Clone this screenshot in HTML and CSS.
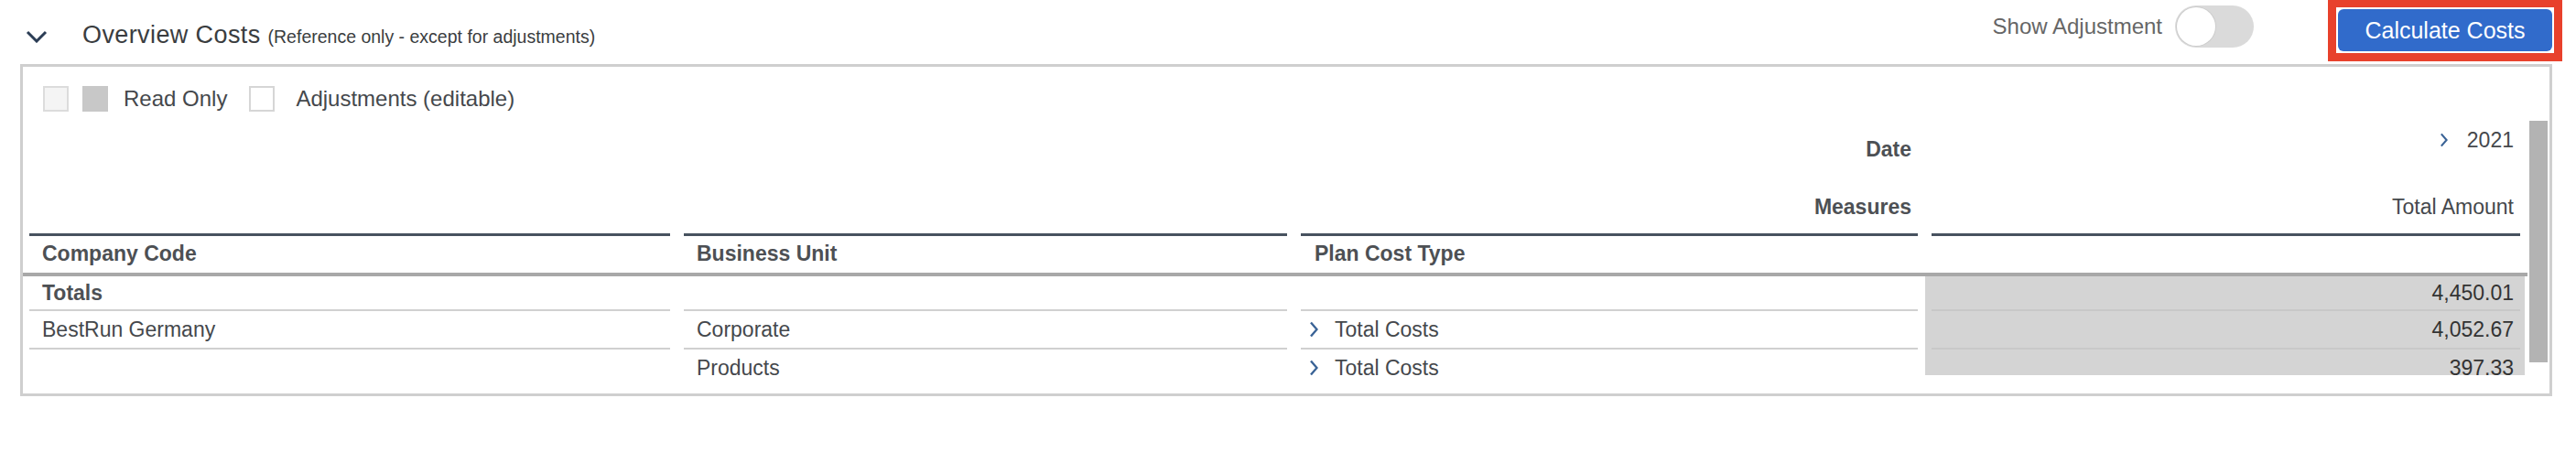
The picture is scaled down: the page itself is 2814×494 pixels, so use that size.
FILE: index.html
```html
<!DOCTYPE html>
<html lang="en">
<head>
<meta charset="utf-8">
<title>Overview Costs</title>
<link rel="stylesheet" href="styles.css">
</head>
<body>
<div class="page">
  <header class="section-header">
    <div class="title-group">
      <svg class="collapse-icon" width="24" height="14" viewBox="0 0 24 14"><polyline points="2,2 12,12 22,2" fill="none" stroke="#2b3d55" stroke-width="3"/></svg>
      <h2 class="title">Overview Costs <span class="subtitle">(Reference only - except for adjustments)</span></h2>
    </div>
    <div class="actions">
      <span class="switch-label">Show Adjustment</span>
      <span class="switch"><span class="switch-knob"></span></span>
      <span class="highlight"><button class="btn-primary" type="button">Calculate Costs</button></span>
    </div>
  </header>

  <section class="panel">
    <div class="legend">
      <span class="swatch swatch-light"></span>
      <span class="swatch swatch-readonly"></span>
      <span class="legend-text">Read Only</span>
      <span class="swatch swatch-edit"></span>
      <span class="legend-text legend-text-edit">Adjustments (editable)</span>
    </div>

    <div class="panel-body">
      <div class="pivot">
        <div class="pivot-head">
          <div class="dim-label date-label">Date</div>
          <div class="measure-head year-head">
            <svg class="chev chev-sm" width="9" height="16" viewBox="0 0 10 18"><polyline points="2,1.5 8.5,9 2,16.5" fill="none" stroke="#3a6396" stroke-width="2.4"/></svg>
            <span>2021</span>
          </div>
          <div class="dim-label measures-label">Measures</div>
          <div class="measure-head amount-head">Total Amount</div>
          <div class="col-head">Company Code</div>
          <div class="col-head">Business Unit</div>
          <div class="col-head col-head-3">Plan Cost Type</div>
          <div class="col-head col-head-data"></div>
        </div>

        <div class="pivot-rule"></div>

        <div class="pivot-body">
          <div class="dims-body">
            <div class="cell r1 bold">Totals</div>
            <div class="cell r1"></div>
            <div class="cell r1"></div>

            <div class="cell r2">BestRun Germany</div>
            <div class="cell r2">Corporate</div>
            <div class="cell r2 cell-member">
              <svg class="chev" width="10" height="18" viewBox="0 0 10 18"><polyline points="2,1.5 8.5,9 2,16.5" fill="none" stroke="#3a6396" stroke-width="2.4"/></svg>
              <span>Total Costs</span>
            </div>

            <div class="cell r3"></div>
            <div class="cell r3">Products</div>
            <div class="cell r3 cell-member">
              <svg class="chev" width="10" height="18" viewBox="0 0 10 18"><polyline points="2,1.5 8.5,9 2,16.5" fill="none" stroke="#3a6396" stroke-width="2.4"/></svg>
              <span>Total Costs</span>
            </div>
          </div>

          <div class="data-body">
            <div class="data-cell r1">4,450.01</div>
            <div class="data-cell r2">4,052.67</div>
            <div class="data-cell r3">397.33</div>
          </div>
        </div>
      </div>

      <div class="scroll-track"><div class="scroll-thumb"></div></div>
    </div>
  </section>
</div>
</body>
</html>
```

FILE: styles.css
```css
* {
  box-sizing: border-box;
}

body {
  margin: 0;
  background: #ffffff;
  font-family: "Liberation Sans", Arial, sans-serif;
  color: #45484c;
}

.page {
  width: 2814px;
  padding: 0 26px 0 22px;
}

/* ---------- section header ---------- */
.section-header {
  display: flex;
  justify-content: space-between;
  align-items: flex-start;
  height: 70px;
}

.title-group {
  display: flex;
  align-items: flex-start;
}

.collapse-icon {
  flex: none;
  margin: 33px 0 0 6px;
}

.title {
  margin: 22px 0 0 38px;
  font-size: 27px;
  line-height: 32px;
  font-weight: 400;
  letter-spacing: 0.4px;
  color: #3a3d40;
  white-space: nowrap;
}

.subtitle {
  font-size: 19.5px;
  line-height: 1;
  letter-spacing: 0;
  color: #3a3d40;
}

.actions {
  display: flex;
  align-items: flex-start;
}

.switch-label {
  margin-top: 14px;
  font-size: 24px;
  line-height: 30px;
  color: #666666;
  white-space: nowrap;
}

.switch {
  display: flex;
  width: 86px;
  height: 46px;
  margin: 6px 0 0 14px;
  padding: 2px;
  border-radius: 23px;
  background: #dadada;
}

.switch-knob {
  width: 42px;
  height: 42px;
  border-radius: 50%;
  background: #ffffff;
  box-shadow: 0 0 0 1px #cdcdcd;
}

.highlight {
  display: flex;
  margin: -1px -11px 0 81px;
  padding: 2px;
  border: 9px solid #e8412c;
  background: #ffffff;
}

.btn-primary {
  width: 234px;
  height: 46px;
  margin: 0;
  padding: 0;
  border: 0;
  border-radius: 6px;
  background: #316bcb;
  color: #ffffff;
  font-family: "Liberation Sans", Arial, sans-serif;
  font-size: 25px;
  line-height: 46px;
}

/* ---------- panel ---------- */
.panel {
  display: flex;
  flex-direction: column;
  height: 363px;
  border: 3px solid #cfcfcf;
}

.legend {
  display: flex;
  align-items: center;
  height: 28px;
  margin: 21px 0 0 22px;
}

.swatch {
  flex: none;
  width: 28px;
  height: 28px;
}

.swatch-light {
  background: #f4f4f4;
  border: 2px solid #dcdcdc;
}

.swatch-readonly {
  margin-left: 15px;
  background: #c8c8c8;
}

.swatch-edit {
  margin-left: 24px;
  background: #ffffff;
  border: 2px solid #d6d6d6;
}

.legend-text {
  margin-left: 17px;
  font-size: 24px;
  line-height: 28px;
  color: #45484c;
  white-space: nowrap;
}

.legend-text-edit {
  margin-left: 23px;
}

.panel-body {
  display: flex;
  flex: 1;
}

.pivot {
  flex: 1;
  padding: 0 3px 0 7px;
}

.scroll-track {
  flex: none;
  width: 20px;
  margin: 0 2px;
}

.scroll-thumb {
  height: 264px;
  margin-top: 10px;
  background: #b3b3b3;
}

/* ---------- pivot header ---------- */
.pivot-head {
  display: grid;
  grid-template-columns: 700px 659px 674px 1fr;
  grid-template-rows: 72px 61px 43px;
  column-gap: 15px;
}

.dim-label {
  grid-column: 1 / 4;
  padding-right: 7px;
  text-align: right;
  font-size: 23px;
  font-weight: 700;
  line-height: 28px;
  color: #4d5054;
}

.date-label {
  grid-row: 1;
  padding-top: 27px;
}

.measures-label {
  grid-row: 2;
  padding-top: 18px;
}

.measure-head {
  grid-column: 4;
  margin-right: 5px;
  padding-right: 7px;
  font-size: 23px;
  line-height: 28px;
  color: #45484c;
  text-align: right;
}

.year-head {
  grid-row: 1;
  display: flex;
  justify-content: flex-end;
  align-items: flex-start;
  gap: 21px;
  padding-top: 17px;
}

.chev-sm {
  margin-top: 6px;
}

.amount-head {
  grid-row: 2;
  padding-top: 18px;
}

.col-head {
  grid-row: 3;
  border-top: 3px solid #47525f;
  padding: 5px 0 0 14px;
  font-size: 23px;
  font-weight: 700;
  line-height: 28px;
  color: #4d5054;
  white-space: nowrap;
}

.col-head-3 {
  padding-left: 15px;
}

.col-head-data {
  grid-column: 4;
  margin-right: 5px;
}

.pivot-rule {
  height: 4px;
  margin: 0 -3px 0 -7px;
  background: #a8a8a8;
}

/* ---------- pivot body ---------- */
.pivot-body {
  display: flex;
  align-items: flex-start;
}

.dims-body {
  display: grid;
  grid-template-columns: 700px 659px 674px;
  column-gap: 15px;
}

.cell {
  display: flex;
  align-items: center;
  padding-left: 14px;
  border-bottom: 2px solid #d0d0d0;
  font-size: 23px;
  color: #45484c;
  white-space: nowrap;
}

.cell.bold {
  font-weight: 700;
  color: #4d5054;
}

.cell-member {
  gap: 18px;
  padding-left: 9px;
}

.chev {
  flex: none;
}

.r1 {
  height: 38px;
}

.r2 {
  height: 42px;
}

.r3 {
  height: 40px;
  border-bottom: 0;
}

.data-body {
  flex: 1;
  height: 108px;
  margin-left: 8px;
  overflow: hidden;
  background: #d4d4d4;
}

.data-cell {
  display: flex;
  align-items: center;
  justify-content: flex-end;
  margin: 0 5px 0 7px;
  padding-right: 7px;
  border-bottom: 2px solid #c8c8c8;
  font-size: 23px;
  color: #333333;
}

.data-cell.r3 {
  border-bottom: 0;
}
```
